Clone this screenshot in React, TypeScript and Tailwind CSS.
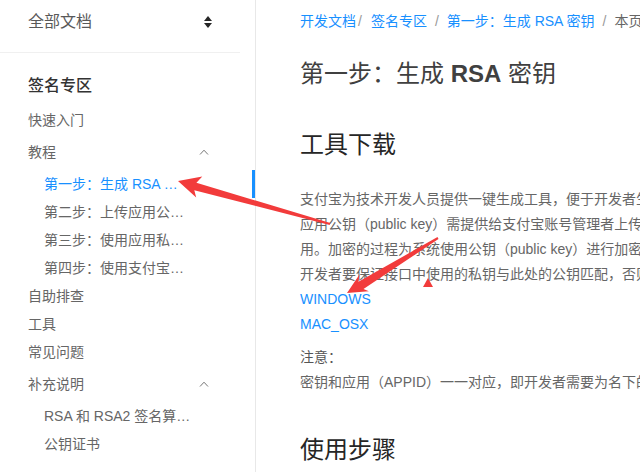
import React from 'react';

const font = { fontFamily: '"Liberation Sans", "Noto Sans CJK SC", sans-serif' };

type NavItem = { label: string; level: 1 | 2; group?: boolean; active?: boolean };

const nav: NavItem[] = [
  { label: '快速入门', level: 1 },
  { label: '教程', level: 1, group: true },
  { label: '第一步：生成 RSA 密钥', level: 2, active: true },
  { label: '第二步：上传应用公钥并获取支付宝公钥', level: 2 },
  { label: '第三步：使用应用私钥生成请求签名', level: 2 },
  { label: '第四步：使用支付宝公钥验签', level: 2 },
  { label: '自助排查', level: 1 },
  { label: '工具', level: 1 },
  { label: '常见问题', level: 1 },
  { label: '补充说明', level: 1, group: true },
  { label: 'RSA 和 RSA2 签名算法的区别', level: 2 },
  { label: '公钥证书', level: 2 },
];

const paragraph = [
  '支付宝为技术开发人员提供一键生成工具，便于开发者生成一对 RSA 密钥。其中应用私钥（private key）需开发者自行保存，',
  '应用公钥（public key）需提供给支付宝账号管理者上传到支付宝开放平台，用于支付宝验证商户请求签名。',
  '用。加密的过程为系统使用公钥（public key）进行加密，使用私钥（private key）进行解密。',
  '开发者要保证接口中使用的私钥与此处的公钥匹配，否则无法调用支付宝开放接口。',
];

function SortIcon() {
  return (
    <svg width="8" height="12" viewBox="0 0 8 12" className="shrink-0">
      <path d="M4 0 L8 5 L0 5 Z" fill="#262626" />
      <path d="M0 7 L8 7 L4 12 Z" fill="#262626" />
    </svg>
  );
}

function ChevronUp() {
  return (
    <svg width="10" height="6" viewBox="0 0 10 6" className="shrink-0">
      <path d="M1 5.5 L5 1.2 L9 5.5" fill="none" stroke="#777" strokeWidth="1" />
    </svg>
  );
}

function Sidebar() {
  return (
    <aside className="w-[256px] shrink-0 h-full border-r border-[#e8e8e8] bg-white">
      <div className="w-[240px] h-[53px] border-b border-[#f0f0f0] pt-[11px] pl-[28px] pr-[28px]">
        <div className="h-[22px] flex items-center justify-between">
          <span className="text-[16px] text-[#595959]">全部文档</span>
          <SortIcon />
        </div>
      </div>
      <div className="pl-[28px] pt-[21px] pb-[8px] text-[16px] leading-6 font-medium text-[#333]">签名专区</div>
      <ul>
        {nav.map((item) => (
          <li
            key={item.label}
            className={
              'relative flex items-center justify-between text-[14px] ' +
              (item.group ? 'h-[36px] ' : 'h-[28px] ') +
              (item.level === 2 ? 'pl-[44px] pr-[46px] ' : 'pl-[28px] pr-[46px] ') +
              (item.active ? 'text-[#1890ff]' : 'text-[#666]')
            }
          >
            <span className={item.level === 2 ? 'w-[147.5px] truncate' : ''}>{item.label}</span>
            {item.group && <ChevronUp />}
            {item.active && <span className="absolute right-0 top-0 h-full w-[3px] bg-[#1890ff]" />}
          </li>
        ))}
      </ul>
    </aside>
  );
}

function Main() {
  return (
    <main className="flex-1 min-w-0 h-full overflow-hidden pl-[44px] whitespace-nowrap">
      <nav className="pt-[10px] flex items-center text-[14px] leading-[22px]">
        <span className="text-[#1890ff]">开发文档</span>
        <span className="ml-[2px] mr-[9px] text-[#999]">/</span>
        <span className="text-[#1890ff]">签名专区</span>
        <span className="mx-[8px] text-[#999]">/</span>
        <span className="text-[#1890ff]">第一步：生成 RSA 密钥</span>
        <span className="mx-[8px] text-[#999]">/</span>
        <span className="text-[#666]">本页导航</span>
      </nav>
      <h1 className="mt-[26px] text-[24px] leading-8 font-normal text-[#404040]">
        第一步：生成 <span className="font-bold">RSA</span> 密钥
      </h1>
      <h2 className="mt-[39px] text-[24px] leading-8 font-normal text-[#262626]">工具下载</h2>
      <div className="mt-[26px] text-[14px] leading-[25px] text-[#666]">
        {paragraph.map((line) => (
          <p key={line}>{line}</p>
        ))}
      </div>
      <div className="text-[14px] leading-[25px] text-[#1890ff]">
        <p>WINDOWS</p>
        <p>MAC_OSX</p>
      </div>
      <div className="mt-[8px] text-[14px] leading-[25px] text-[#666]">
        <p className="text-[#555]">注意：</p>
        <p>密钥和应用（APPID）一一对应，即开发者需要为名下的每一个应用生成一对密钥。</p>
      </div>
      <h2 className="mt-[39px] text-[24px] leading-8 font-normal text-[#262626]">使用步骤</h2>
    </main>
  );
}

function Annotations() {
  return (
    <svg className="absolute inset-0 pointer-events-none" width="640" height="472" viewBox="0 0 640 472">
      <polygon
        points="178,181 202.3,176.4 196.4,182.7 330.3,223 329.7,225 194.3,190.2 196.2,197.5"
        fill="#f23b3b"
      />
      <polygon
        points="347,293 359.5,274.4 358.4,281.7 437.5,237.1 438.5,238.9 363.5,289.1 368.8,291.3"
        fill="#f23b3b"
      />
      <polygon points="423,287 428,278 433,287" fill="#f23b3b" />
    </svg>
  );
}

export default function App() {
  return (
    <div className="relative w-full h-[472px] overflow-hidden flex bg-white" style={font}>
      <Sidebar />
      <Main />
      <Annotations />
    </div>
  );
}
